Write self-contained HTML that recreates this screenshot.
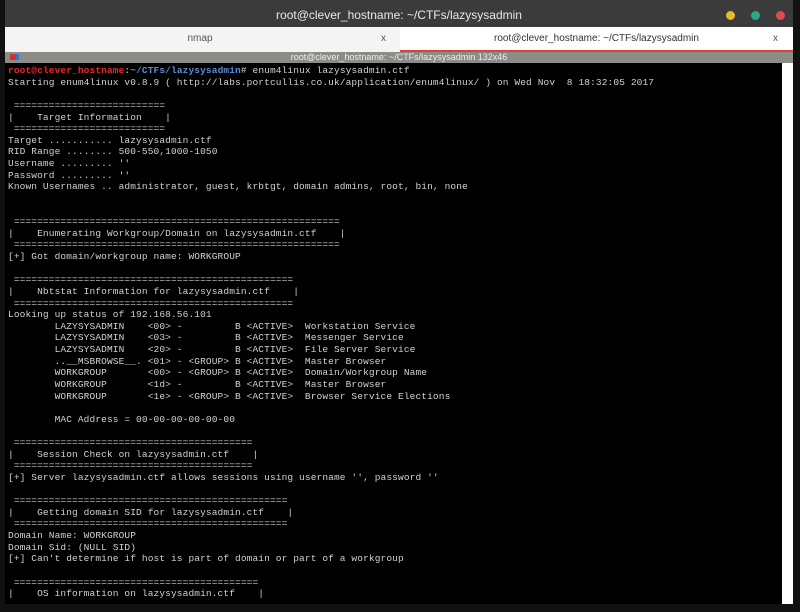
<!DOCTYPE html>
<html><head><style>
body{margin:0;width:800px;height:612px;background:#111;overflow:hidden;position:relative;font-family:"Liberation Sans",sans-serif}
#title{position:absolute;left:5px;top:0;width:788px;height:27px;background:#3b3b3b;color:#e8e8e8;font-size:12px;text-align:center;line-height:30px}
.dot{position:absolute;top:11px;width:9px;height:9px;border-radius:50%}
#tabs{position:absolute;left:5px;top:27px;width:788px;height:25px;background:#f4f4f4}
.tab{position:absolute;top:0;height:25px;line-height:24px;font-size:10px;color:#555;text-align:center}
.x{position:absolute;top:0;font-size:10px;color:#555;line-height:24px}
#bar{position:absolute;left:5px;top:52px;width:788px;height:11px;background:#8b8c87;color:#eee;font-size:9px;line-height:11px;text-align:center}
#term{position:absolute;left:5px;top:63px;width:777px;height:541px;background:#000;overflow:hidden}
pre{margin:0;position:absolute;left:3px;top:2px;font-family:"Liberation Mono",monospace;font-size:9.5px;letter-spacing:0.12px;line-height:11.62px;color:#d2d2d2}
.r{color:#e8282a;font-weight:bold}.b{color:#5c8ed6;font-weight:bold}
#sb{position:absolute;left:782px;top:63px;width:11px;height:541px;background:#fff}
</style></head><body>
<div id="title">root@clever_hostname: ~/CTFs/lazysysadmin
<span class="dot" style="left:721px;background:#e8b830"></span><span class="dot" style="left:746px;background:#2aa88c"></span><span class="dot" style="left:771px;background:#e04a4a"></span></div>
<div id="tabs"><div class="tab" style="left:0;width:390px">nmap</div><span class="x" style="left:376px">x</span>
<div class="tab" style="left:395px;width:393px;background:#fff;border-bottom:2px solid #e0403a;height:23px;color:#333">root@clever_hostname: ~/CTFs/lazysysadmin</div><span class="x" style="left:768px">x</span></div>
<div id="bar"><span style="position:absolute;left:5px;top:2px;width:6px;height:6px;background:#c33;border-right:3px solid #37c"></span>root@clever_hostname: ~/CTFs/lazysysadmin 132x46</div>
<div id="term"><pre><span class="r">root@clever_hostname</span>:<span class="b">~/CTFs/lazysysadmin</span># enum4linux lazysysadmin.ctf
Starting enum4linux v0.8.9 ( http://labs.portcullis.co.uk/application/enum4linux/ ) on Wed Nov  8 18:32:05 2017

 ==========================
|    Target Information    |
 ==========================
Target ........... lazysysadmin.ctf
RID Range ........ 500-550,1000-1050
Username ......... ''
Password ......... ''
Known Usernames .. administrator, guest, krbtgt, domain admins, root, bin, none


 ========================================================
|    Enumerating Workgroup/Domain on lazysysadmin.ctf    |
 ========================================================
[+] Got domain/workgroup name: WORKGROUP

 ================================================
|    Nbtstat Information for lazysysadmin.ctf    |
 ================================================
Looking up status of 192.168.56.101
        LAZYSYSADMIN    &lt;00&gt; -         B &lt;ACTIVE&gt;  Workstation Service
        LAZYSYSADMIN    &lt;03&gt; -         B &lt;ACTIVE&gt;  Messenger Service
        LAZYSYSADMIN    &lt;20&gt; -         B &lt;ACTIVE&gt;  File Server Service
        ..__MSBROWSE__. &lt;01&gt; - &lt;GROUP&gt; B &lt;ACTIVE&gt;  Master Browser
        WORKGROUP       &lt;00&gt; - &lt;GROUP&gt; B &lt;ACTIVE&gt;  Domain/Workgroup Name
        WORKGROUP       &lt;1d&gt; -         B &lt;ACTIVE&gt;  Master Browser
        WORKGROUP       &lt;1e&gt; - &lt;GROUP&gt; B &lt;ACTIVE&gt;  Browser Service Elections

        MAC Address = 00-00-00-00-00-00

 =========================================
|    Session Check on lazysysadmin.ctf    |
 =========================================
[+] Server lazysysadmin.ctf allows sessions using username '', password ''

 ===============================================
|    Getting domain SID for lazysysadmin.ctf    |
 ===============================================
Domain Name: WORKGROUP
Domain Sid: (NULL SID)
[+] Can't determine if host is part of domain or part of a workgroup

 ==========================================
|    OS information on lazysysadmin.ctf    |
</pre></div>
<div id="sb"></div>
</body></html>
